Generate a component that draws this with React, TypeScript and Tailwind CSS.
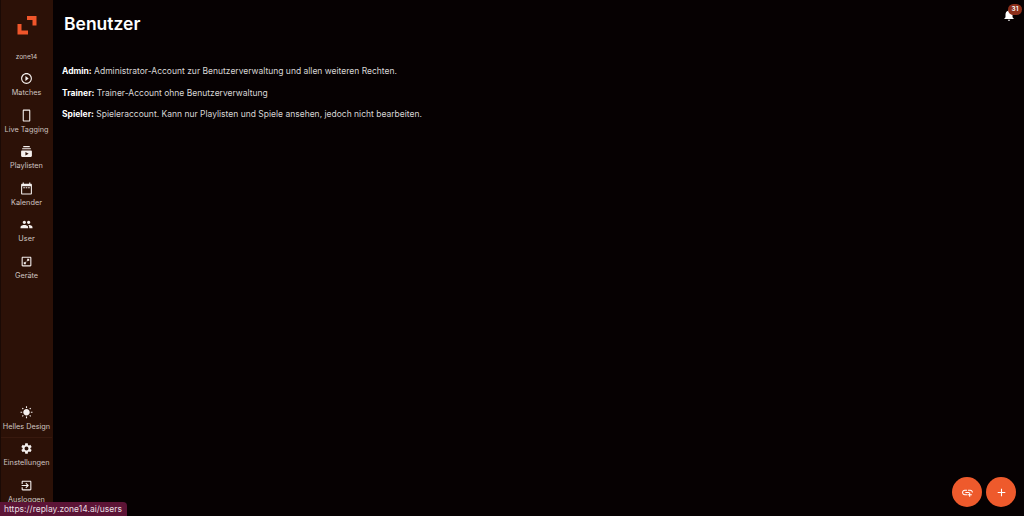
const icons = {
  matches: 'M10 16.5l6-4.5-6-4.5v9zM12 2C6.48 2 2 6.48 2 12s4.48 10 10 10 10-4.48 10-10S17.52 2 12 2zm0 18c-4.41 0-8-3.59-8-8s3.59-8 8-8 8 3.59 8 8-3.59 8-8 8z',
  tagging: 'M17 1.01L7 1c-1.1 0-2 .9-2 2v18c0 1.1.9 2 2 2h10c1.1 0 2-.9 2-2V3c0-1.1-.9-1.99-2-1.99zM17 21H7V3h10v18z',
  playlists: 'M20 8H4V6h16v2zm-2-6H6v2h12V2zm4 10v8c0 1.1-.9 2-2 2H4c-1.1 0-2-.9-2-2v-8c0-1.1.9-2 2-2h16c1.1 0 2 .9 2 2zm-6 4l-6-3.27v6.53L16 16z',
  calendar: 'M20 3h-1V1h-2v2H7V1H5v2H4c-1.1 0-2 .9-2 2v16c0 1.1.9 2 2 2h16c1.1 0 2-.9 2-2V5c0-1.1-.9-2-2-2zm0 18H4V8h16v13zM6 9.5h3v2H6zm4.5 0h3v2h-3zm4.5 0h3v2h-3z',
  users: 'M16 11c1.66 0 2.99-1.34 2.99-3S17.66 5 16 5c-1.66 0-3 1.34-3 3s1.34 3 3 3zm-8 0c1.66 0 2.99-1.34 2.99-3S9.66 5 8 5C6.34 5 5 6.34 5 8s1.34 3 3 3zm0 2c-2.33 0-7 1.17-7 3.5V19h14v-2.5c0-2.33-4.67-3.5-7-3.5zm8 0c-.29 0-.62.02-.97.05 1.16.84 1.97 1.97 1.97 3.45V19h6v-2.5c0-2.33-4.67-3.5-7-3.5z',
  devices: 'M19 3H5c-1.1 0-2 .9-2 2v14c0 1.1.9 2 2 2h14c1.1 0 2-.9 2-2V5c0-1.1-.9-2-2-2zm0 16H5V5h14v14zM13 7h4v4h-1.6V9.7l-2.3 2.3-1.1-1.1 2.3-2.3H13V7zm-2 10H7v-4h1.6v1.3l2.3-2.3 1.1 1.1-2.3 2.3H11V17z',
  sun: 'M6.76 4.84l-1.8-1.79-1.41 1.41 1.79 1.79 1.42-1.41zM4 10.5H1v2h3v-2zm9-9.95h-2V3.5h2V.55zm7.45 3.91l-1.41-1.41-1.79 1.79 1.41 1.41 1.79-1.79zm-3.21 13.7l1.79 1.8 1.41-1.41-1.8-1.79-1.4 1.4zM20 10.5v2h3v-2h-3zm-8-5c-3.31 0-6 2.69-6 6s2.69 6 6 6 6-2.69 6-6-2.69-6-6-6zm-1 16.95h2V19.5h-2v2.95zm-7.45-3.91l1.41 1.41 1.79-1.8-1.41-1.41-1.79 1.8z',
  settings: 'M19.14 12.94c.04-.3.06-.61.06-.94 0-.32-.02-.64-.07-.94l2.03-1.58c.18-.14.23-.41.12-.61l-1.92-3.32c-.12-.22-.37-.29-.59-.22l-2.39.96c-.5-.38-1.03-.7-1.62-.94l-.36-2.54c-.04-.24-.24-.41-.48-.41h-3.84c-.24 0-.43.17-.47.41l-.36 2.54c-.59.24-1.13.57-1.62.94l-2.39-.96c-.22-.08-.47 0-.59.22L2.74 8.87c-.12.21-.08.47.12.61l2.03 1.58c-.05.3-.09.63-.09.94s.02.64.07.94l-2.03 1.58c-.18.14-.23.41-.12.61l1.92 3.32c.12.22.37.29.59.22l2.39-.96c.5.38 1.03.7 1.62.94l.36 2.54c.05.24.24.41.48.41h3.84c.24 0 .44-.17.47-.41l.36-2.54c.59-.24 1.13-.56 1.62-.94l2.39.96c.22.08.47 0 .59-.22l1.92-3.32c.12-.22.07-.47-.12-.61l-2.01-1.58zM12 15.6c-1.98 0-3.6-1.62-3.6-3.6s1.62-3.6 3.6-3.6 3.6 1.62 3.6 3.6-1.62 3.6-3.6 3.6z',
  logout: 'M10.09 15.59L11.5 17l5-5-5-5-1.41 1.41L12.67 11H3v2h9.67l-2.58 2.59zM19 3H5c-1.11 0-2 .9-2 2v4h2V5h14v14H5v-4H3v4c0 1.1.89 2 2 2h14c1.1 0 2-.9 2-2V5c0-1.1-.9-2-2-2z',
  bell: 'M12 22c1.1 0 2-.9 2-2h-4c0 1.1.89 2 2 2zm6-6v-5c0-3.07-1.64-5.64-4.5-6.32V4c0-.83-.67-1.5-1.5-1.5s-1.5.67-1.5 1.5v.68C7.63 5.36 6 7.92 6 11v5l-2 2v1h16v-1l-2-2z',
  addLink: 'M8 11h8v2H8zm12.1 1H22c0-2.76-2.24-5-5-5h-4v1.9h4c1.71 0 3.1 1.39 3.1 3.1zM3.9 12c0-1.71 1.39-3.1 3.1-3.1h4V7H7c-2.76 0-5 2.24-5 5s2.24 5 5 5h4v-1.9H7c-1.71 0-3.1-1.39-3.1-3.1zM17 12h-2v3h-3v2h3v3h2v-3h3v-2h-3z',
  plus: 'M19 13h-6v6h-2v-6H5v-2h6V5h2v6h6v2z'
};

const Icon = ({ d, className = 'w-[14px] h-[14px]' }: { d: string; className?: string }) => (
  <svg viewBox="0 0 24 24" fill="currentColor" className={className}>
    <path d={d} />
  </svg>
);

const NavItem = ({ icon, label }: { icon: string; label: string }) => (
  <div className="h-[36.5px] shrink-0 flex flex-col items-center pt-[2px]">
    <Icon d={icon} className="w-[13px] h-[13px] text-[#f5f0ee]" />
    <span className="mt-[2px] text-[7.300px] leading-[12px] text-[#cfc5c1] whitespace-nowrap">{label}</span>
  </div>
);

const topItems = [
  { icon: icons.matches, label: 'Matches' },
  { icon: icons.tagging, label: 'Live Tagging' },
  { icon: icons.playlists, label: 'Playlisten' },
  { icon: icons.calendar, label: 'Kalender' },
  { icon: icons.users, label: 'User' },
  { icon: icons.devices, label: 'Geräte' }
];

const roles = [
  { name: 'Admin:', text: 'Administrator-Account zur Benutzerverwaltung und allen weiteren Rechten.' },
  { name: 'Trainer:', text: 'Trainer-Account ohne Benutzerverwaltung' },
  { name: 'Spieler:', text: 'Spieleraccount. Kann nur Playlisten und Spiele ansehen, jedoch nicht bearbeiten.' }
];

export default function App() {
  return (
    <div className="relative flex h-[516px] w-[1024px] overflow-hidden bg-[#060102] font-['Inter',sans-serif]">
      {/* Sidebar */}
      <aside className="flex h-full w-[53px] shrink-0 flex-col border-l border-[#1a0a05] bg-[#2c1107] pb-[3px] pr-[1px]">
        <div className="flex h-[52px] shrink-0 items-start justify-center pt-[15px]">
          <svg viewBox="0 0 20 20" className="h-[20px] w-[20px] text-[#f0562b]" fill="currentColor">
            <path d="M10 1h9.500v9.500h-4V5H10zM0.500 9h4v6.500h6.500v4H0.500z" />
          </svg>
        </div>
        <div className="h-[18px] shrink-0 text-center text-[6.500px] leading-[10px] text-[#cfc5c1]">zone14</div>
        {topItems.map((item) => (
          <NavItem key={item.label} icon={item.icon} label={item.label} />
        ))}
        <div className="mt-auto">
          <div className="-mb-[3px]">
            <NavItem icon={icons.sun} label="Helles Design" />
          </div>
          <div className="border-t border-[#38190e] pt-[2px]">
            <NavItem icon={icons.settings} label="Einstellungen" />
          </div>
          <NavItem icon={icons.logout} label="Ausloggen" />
        </div>
      </aside>

      {/* Content */}
      <main className="flex-1 pl-[9px] pt-[13px]">
        <h1 className="pl-[2px] text-[17.500px] leading-[22px] font-semibold text-white">Benutzer</h1>
        <div className="mt-[30px] flex flex-col gap-[9.500px]">
          {roles.map((role) => (
            <p key={role.name} className="text-[8.500px] leading-[12px] text-[#d8d6d6]">
              <span className="font-bold text-white">{role.name}</span> {role.text}
            </p>
          ))}
        </div>
      </main>

      {/* Notifications */}
      <div className="absolute right-[8px] top-[8px] text-white">
        <Icon d={icons.bell} className="h-[14px] w-[14px]" />
        <span className="absolute -right-[6px] -top-[4px] flex h-[11px] w-[14px] items-center justify-center rounded-full bg-[#8c2f1b] text-[6.500px] font-semibold text-white">31</span>
      </div>

      {/* Action buttons */}
      <div className="absolute bottom-[9px] right-[8px] flex gap-[4px]">
        <button className="flex h-[30px] w-[30px] items-center justify-center rounded-full bg-[#ee5a2c] text-white">
          <Icon d={icons.addLink} className="h-[13px] w-[13px]" />
        </button>
        <button className="flex h-[30px] w-[30px] items-center justify-center rounded-full bg-[#ee5a2c] text-white">
          <Icon d={icons.plus} className="h-[13px] w-[13px]" />
        </button>
      </div>

      {/* Status link */}
      <div className="absolute bottom-0 left-0 h-[14px] w-[127px] rounded-tr-[4px] bg-[#5c1436] pl-[4px] text-[8.500px] leading-[14px] text-[#e8dfe2]">
        https://replay.zone14.ai/users
      </div>
    </div>
  );
}
